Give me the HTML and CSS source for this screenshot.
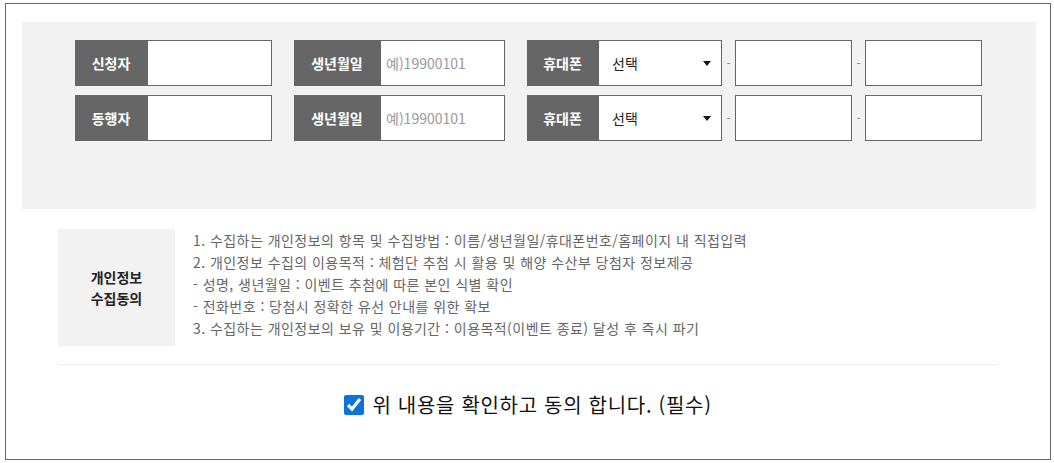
FILE: index.html
```html
<!DOCTYPE html>
<html lang="ko">
<head>
    <meta charset="UTF-8">
    <meta name="viewport" content="width=device-width, initial-scale=1.0">
    <title>체험단 신청</title>
    <link rel="stylesheet" href="styles.css">
</head>
<body>
    <div class="wrap">
        <div class="apply">
            <div class="row">
                <div class="field">
                    <span class="lbl lbl-name">신청자</span>
                    <input type="text" class="txt txt-name">
                </div>
                <div class="field">
                    <span class="lbl lbl-birth">생년월일</span>
                    <input type="text" class="txt txt-birth" placeholder="예)19900101">
                </div>
                <div class="field">
                    <span class="lbl lbl-phone">휴대폰</span>
                    <div class="sel">
                        <select>
                            <option>선택</option>
                            <option>010</option>
                            <option>011</option>
                        </select>
                    </div>
                    <span class="dash">-</span>
                    <input type="text" class="txt txt-phone">
                    <span class="dash">-</span>
                    <input type="text" class="txt txt-phone">
                </div>
            </div>
            <div class="row">
                <div class="field">
                    <span class="lbl lbl-name">동행자</span>
                    <input type="text" class="txt txt-name">
                </div>
                <div class="field">
                    <span class="lbl lbl-birth">생년월일</span>
                    <input type="text" class="txt txt-birth" placeholder="예)19900101">
                </div>
                <div class="field">
                    <span class="lbl lbl-phone">휴대폰</span>
                    <div class="sel">
                        <select>
                            <option>선택</option>
                            <option>010</option>
                            <option>011</option>
                        </select>
                    </div>
                    <span class="dash">-</span>
                    <input type="text" class="txt txt-phone">
                    <span class="dash">-</span>
                    <input type="text" class="txt txt-phone">
                </div>
            </div>
        </div>

        <div class="agree">
            <div class="agree-box">
                <div class="agree-tit">개인정보<br>수집동의</div>
                <ul class="agree-txt">
                    <li>1. 수집하는 개인정보의 항목 및 수집방법 : 이름/생년월일/휴대폰번호/홈페이지 내 직접입력</li>
                    <li>2. 개인정보 수집의 이용목적 : 체험단 추첨 시 활용 및 해양 수산부 당첨자 정보제공</li>
                    <li>- 성명, 생년월일 : 이벤트 추첨에 따른 본인 식별 확인</li>
                    <li>- 전화번호 : 당첨시 정확한 유선 안내를 위한 확보</li>
                    <li>3. 수집하는 개인정보의 보유 및 이용기간 : 이용목적(이벤트 종료) 달성 후 즉시 파기</li>
                </ul>
            </div>
            <label class="agree-chk">
                <input type="checkbox" checked>
                <span>위 내용을 확인하고 동의 합니다. (필수)</span>
            </label>
        </div>
    </div>
</body>
</html>
```

FILE: styles.css
```css
body {
    margin: 0;
    font-family: "Noto Sans CJK KR", "Noto Sans", sans-serif;
    color: #222;
}
.wrap {
    box-sizing: border-box;
    height: 457px;
    margin: 3px 3px 0 5px;
    padding: 18px 14px 0 16px;
    border: 1px solid #666;
}

/* 신청 입력 영역 */
.apply {
    box-sizing: border-box;
    height: 187px;
    padding: 18px 0 0 53px;
    background: #f2f2f2;
    display: flex;
    flex-direction: column;
    gap: 9px;
}
.row {
    display: flex;
    gap: 22px;
}
.field {
    display: flex;
    height: 46px;
}
.lbl {
    display: flex;
    align-items: center;
    justify-content: center;
    background: #666;
    color: #fff;
    font-size: 14px;
    font-weight: bold;
}
.lbl-name { width: 72px; }
.lbl-birth { width: 86px; }
.lbl-phone { width: 71px; }
.txt {
    box-sizing: border-box;
    height: 46px;
    margin: 0;
    padding: 0 5px;
    border: 1px solid #666;
    background: #fff;
    font-family: inherit;
    font-size: 14px;
    color: #222;
    outline: none;
}
.txt::placeholder {
    color: #999;
}
.txt-name { width: 125px; }
.txt-birth { width: 125px; }
.txt-phone { width: 117px; }
.dash {
    width: 13px;
    text-align: center;
    line-height: 46px;
    font-size: 12px;
    color: #888;
}
.sel {
    position: relative;
    width: 124px;
}
.sel select {
    box-sizing: border-box;
    width: 100%;
    height: 46px;
    margin: 0;
    padding: 0 13px;
    border: 1px solid #666;
    border-radius: 0;
    background: #fff;
    font-family: inherit;
    font-size: 14px;
    color: #222;
    appearance: none;
    -webkit-appearance: none;
    outline: none;
}
.sel::after {
    content: "";
    position: absolute;
    right: 11px;
    top: 21px;
    border-left: 4px solid transparent;
    border-right: 4px solid transparent;
    border-top: 5px solid #111;
    pointer-events: none;
}

/* 개인정보 동의 */
.agree {
    width: 940px;
    margin: 20px 0 0 36px;
}
.agree-box {
    display: flex;
    padding-bottom: 18px;
    border-bottom: 1px solid #eee;
}
.agree-tit {
    display: flex;
    align-items: center;
    justify-content: center;
    width: 117px;
    height: 117px;
    background: #f2f2f2;
    text-align: center;
    font-size: 14px;
    font-weight: bold;
    line-height: 21px;
    color: #222;
}
.agree-txt {
    margin: 0 0 0 18px;
    padding: 0;
    list-style: none;
    font-size: 14px;
    line-height: 22px;
    letter-spacing: 0.45px;
    color: #666;
}
.agree-chk {
    display: flex;
    align-items: center;
    justify-content: center;
    margin-top: 29px;
    font-size: 20px;
    line-height: 22px;
    letter-spacing: 0.7px;
    color: #111;
    cursor: pointer;
}
.agree-chk input {
    width: 20px;
    height: 20px;
    margin: 0 8px 0 0;
    accent-color: #0a74da;
}
```
